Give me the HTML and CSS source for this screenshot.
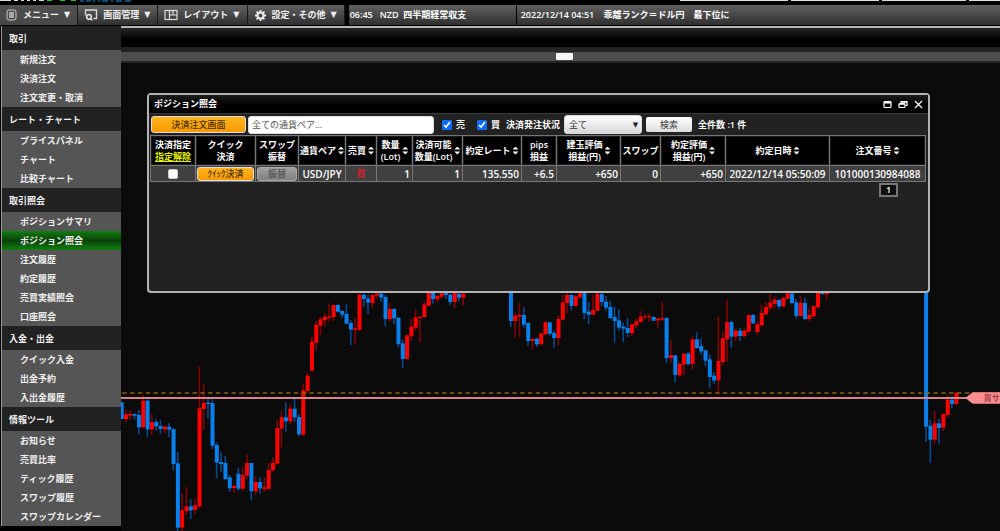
FILE: index.html
```html
<!DOCTYPE html>
<html lang="ja">
<head>
<meta charset="utf-8">
<title>ポジション照会</title>
<link rel="stylesheet" href="styles.css">
</head>
<body>
<header class="brand">
  <svg class="brand-logo" width="140" height="5" viewBox="0 0 140 5" aria-hidden="true">
    <path d="M0 0h11v1h-11zM14 0h4v1h-4zM21 0h3v1h-3zM27 0h3v1h-3zM33 0h3v1h-3zM39 0h5v1h-5z" fill="#d8dcd8"/>
    <path d="M47 0h5v1h-5zM60 0h5v1h-5zM71 0h5v1h-5z" fill="#20c828"/>
    <path d="M80 0h4v2h-4zM86 0h5v2h-5zM93 0h2v2h-2zM98 0h2v2h-2zM102 0h6v2h-6zM111 0h2v2h-2zM116 0h6v2h-6zM125 0h6v2h-6z" fill="#064a70"/>
  </svg>
  <div class="brand-tabs"><span></span><span></span><span></span><span></span></div>
</header>

<div class="toolbar">
  <nav class="toolbar-menus">
    <button class="tool tool-active" type="button">
      <svg width="12" height="12" viewBox="0 0 12 12"><rect x="1" y="1" width="9" height="10" rx="2" fill="none" stroke="#ccc"/><rect x="3" y="3" width="5" height="6" fill="#aaa"/></svg>
      <span>メニュー</span><i>▼</i>
    </button>
    <button class="tool" type="button">
      <svg width="14" height="12" viewBox="0 0 14 12" fill="none" stroke="#ddd" stroke-width="1.3"><path d="M1.5 5V1h11v8.500H9.500"/><circle cx="5" cy="8" r="2.300" stroke-width="1.700"/><path d="M1 5.500l1.500 1M7 10l1.500 1.200"/></svg>
      <span>画面管理</span><i>▼</i>
    </button>
    <button class="tool" type="button">
      <svg width="14" height="12" viewBox="0 0 14 12" fill="none" stroke="#ddd" stroke-width="1.200"><rect x="1" y="1.500" width="12" height="9"/><path d="M5.500 1.500v9M5.500 6H13M9 6V1.500"/></svg>
      <span>レイアウト</span><i>▼</i>
    </button>
    <button class="tool" type="button">
      <svg width="13" height="13" viewBox="0 0 13 13" fill="none" stroke="#eee"><circle cx="6.500" cy="6.500" r="3" stroke-width="2"/><path d="M6.500 1v2M6.500 10v2M1 6.500h2M10 6.500h2M2.600 2.600L4 4M9 9l1.400 1.400M10.400 2.600L9 4M4 9l-1.400 1.400" stroke-width="1.800"/></svg>
      <span>設定・その他</span><i>▼</i>
    </button>
  </nav>
  <div class="ticker ticker-event">06:45&nbsp;&nbsp; NZD&nbsp; 四半期経常収支</div>
  <div class="ticker ticker-news">2022/12/14 04:51&nbsp;&nbsp;&nbsp; 乖離ランク＝ドル円　最下位に</div>
</div>

<div class="workspace">
  <nav class="sidebar">
    <h2>取引</h2>
    <ul>
      <li><a href="#">新規注文</a></li>
      <li><a href="#">決済注文</a></li>
      <li><a href="#">注文変更・取消</a></li>
    </ul>
    <h2>レート・チャート</h2>
    <ul>
      <li><a href="#">プライスパネル</a></li>
      <li><a href="#">チャート</a></li>
      <li><a href="#">比較チャート</a></li>
    </ul>
    <h2>取引照会</h2>
    <ul>
      <li><a href="#">ポジションサマリ</a></li>
      <li><a href="#" class="current">ポジション照会</a></li>
      <li><a href="#">注文履歴</a></li>
      <li><a href="#">約定履歴</a></li>
      <li><a href="#">売買実績照会</a></li>
      <li><a href="#">口座照会</a></li>
    </ul>
    <h2>入金・出金</h2>
    <ul>
      <li><a href="#">クイック入金</a></li>
      <li><a href="#">出金予約</a></li>
      <li><a href="#">入出金履歴</a></li>
    </ul>
    <h2>情報ツール</h2>
    <ul>
      <li><a href="#">お知らせ</a></li>
      <li><a href="#">売買比率</a></li>
      <li><a href="#">ティック履歴</a></li>
      <li><a href="#">スワップ履歴</a></li>
      <li><a href="#">スワップカレンダー</a></li>
    </ul>
  </nav>

  <main class="desktop">
    <div class="panel-head"></div>
    <div class="splitter"><span class="splitter-grip"></span></div>
    <svg class="chart" viewBox="0 0 2637 1404" role="img" aria-label="USD/JPY">
      <g id="candles" transform="translate(2 666)"></g>
      <path d="M4 990H2637" stroke="#8a6410" stroke-width="4" stroke-dasharray="13 10.400"/>
      <path d="M0 1005H2540" stroke="#d88488" stroke-width="6"/>
      <path d="M2533 1005l22-17h82v34h-82z" fill="#f98e90"/>
      <text x="2588" y="1014" class="tag-text">買サ</text>
    </svg>

    <section class="window">
      <header class="window-title">
        <h1>ポジション照会</h1>
        <div class="window-tools">
          <button type="button" aria-label="最大化"><svg width="9" height="9" viewBox="0 0 9 9"><rect x="1" y="1.500" width="7" height="6" rx="1" fill="none" stroke="#fff" stroke-width="1.200"/><path d="M1 2.500h7" stroke="#fff" stroke-width="2"/></svg></button>
          <button type="button" aria-label="元に戻す"><svg width="10" height="9" viewBox="0 0 10 9"><path d="M3 3V1.500h6v4H7.500" fill="none" stroke="#fff" stroke-width="1.200"/><rect x="1" y="3.500" width="6" height="4" rx="1" fill="none" stroke="#fff" stroke-width="1.200"/><path d="M1 4h6M3 2h6" stroke="#fff" stroke-width="1.400"/></svg></button>
          <button type="button" aria-label="閉じる"><svg width="9" height="9" viewBox="0 0 9 9"><path d="M1 1l7 7M8 1L1 8" stroke="#fff" stroke-width="1.200"/></svg></button>
        </div>
      </header>

      <form class="filters">
        <button class="btn-orange btn-close-order" type="button">決済注文画面</button>
        <input class="pair" type="text" placeholder="全ての通貨ペア..." aria-label="通貨ペア">
        <label class="check check-sell"><input type="checkbox" checked>売</label>
        <label class="check"><input type="checkbox" checked>買</label>
        <label class="status-label" for="status">決済発注状況</label>
        <span class="select-wrap"><select id="status"><option>全て</option></select></span>
        <button class="btn-search" type="button">検索</button>
        <span class="total">全件数 :1 件</span>
      </form>

      <table class="positions">
        <colgroup><col class="c-pick"><col class="c-quick"><col class="c-swap"><col class="c-pair"><col class="c-side"><col class="c-lot"><col class="c-avail"><col class="c-rate"><col class="c-pips"><col class="c-open"><col class="c-points"><col class="c-pl"><col class="c-time"><col class="c-number"></colgroup>
        <thead>
          <tr>
            <th>決済指定<br><a href="#">指定解除</a></th>
            <th>クイック<br>決済</th>
            <th>スワップ<br>振替</th>
            <th><div class="sortable"><span>通貨ペア</span></div></th>
            <th><div class="sortable"><span>売買</span></div></th>
            <th><div class="sortable"><span>数量<br>(Lot)</span></div></th>
            <th><div class="sortable"><span>決済可能<br>数量(Lot)</span></div></th>
            <th><div class="sortable"><span>約定レート</span></div></th>
            <th>pips<br>損益</th>
            <th><div class="sortable"><span>建玉評価<br>損益(円)</span></div></th>
            <th>スワップ</th>
            <th><div class="sortable"><span>約定評価<br>損益(円)</span></div></th>
            <th><div class="sortable"><span>約定日時</span></div></th>
            <th><div class="sortable"><span>注文番号</span></div></th>
          </tr>
        </thead>
        <tbody>
          <tr>
            <td class="center"><input class="pick" type="checkbox" aria-label="決済指定"></td>
            <td class="action"><button class="btn-orange btn-row" type="button">ｸｲｯｸ決済</button></td>
            <td class="action"><button class="btn-row btn-off" type="button" disabled>振替</button></td>
            <td class="center">USD/JPY</td>
            <td class="center buy">買</td>
            <td>1</td>
            <td>1</td>
            <td>135.550</td>
            <td>+6.5</td>
            <td>+650</td>
            <td>0</td>
            <td>+650</td>
            <td class="center">2022/12/14 05:50:09</td>
            <td class="center">101000130984088</td>
          </tr>
        </tbody>
      </table>
      <div class="pager"><button type="button">1</button></div>
    </section>
  </main>
</div>
<script src="chart.js"></script>
</body>
</html>
```

FILE: styles.css
```css
* { box-sizing: border-box; }

body {
  margin: 0;
  min-height: 100vh;
  display: flex;
  flex-direction: column;
  overflow: hidden;
  background: #000;
  color: #fff;
  font: 600 9px/12px "Open Sans", "Noto Sans CJK JP", sans-serif;
}

button, input, select { font: inherit; color: inherit; margin: 0; }
button { padding: 0; border: 0; background: none; }
a { color: inherit; text-decoration: none; }
h1, h2 { margin: 0; font: inherit; }
ul { margin: 0; padding: 0; list-style: none; }

.brand { display: flex; justify-content: space-between; height: 5px; }
.brand-tabs { display: flex; gap: 3px; width: 32%; height: 1px; }
.brand-tabs span { flex: 108; background: #dde2de; }
.brand-tabs span:nth-child(2) { flex: 87; }
.brand-tabs span:nth-child(3) { flex: 84; }
.brand-tabs span:nth-child(4) { flex: 31; }

.toolbar { display: flex; height: 21px; padding-bottom: 1px; }
.toolbar-menus { display: flex; margin-right: 4px; }
.tool, .ticker { background: linear-gradient(#606060, #303030); }
.tool {
  display: flex;
  align-items: center;
  gap: 5px;
  padding: 0 7px 0 6px;
  border-right: 1px solid #181818;
  color: #f0f0f0;
  white-space: nowrap;
}
.tool-active { background: linear-gradient(#505050, #484848); }
.tool i { font: normal 8px/12px "DejaVu Sans", sans-serif; }
.tool svg { display: block; }
.ticker { line-height: 20px; white-space: nowrap; overflow: hidden; }
.ticker-event { width: 168px; padding-left: 1px; border-right: 1px solid #000; }
.ticker-news { flex: 1; padding-left: 4px; }

.workspace { flex: 1; display: flex; align-items: flex-start; }

.sidebar {
  flex: none;
  width: 120px;
  margin-left: 1px;
  border-left: 1px solid #999;
  background: #555;
  color: #f0f0f0;
}
.sidebar h2 { height: 24px; padding-left: 7px; line-height: 26px; background: #222; }
.sidebar a { display: block; height: 19px; padding-left: 18px; line-height: 19px; }
.sidebar .current { background: linear-gradient(#108010, #0a4008 50%, #108010); }

.desktop { position: relative; flex: 1; min-width: 0; background: #0b0b0b; }
.panel-head {
  height: 21px;
  border-top: 2px solid #b4b4b4;
  background: linear-gradient(#262626, #000 60%);
}
.splitter {
  display: flex;
  justify-content: center;
  height: 16px;
  padding: 1px 0 1px 8px;
  border: solid #242424;
  border-width: 5px 0 2px;
  background: #4d4d4d;
}
.splitter-grip { width: 17px; border-radius: 1px; background: #f4f4f4; }
.chart { display: block; width: 100%; }
.tag-text { font-size: 24px; fill: #a83c44; }
.up { fill: #f00; }
.up-wick { fill: #7c0404; }
.down { fill: #0a80ec; }
.down-wick { fill: #06488a; }

.window {
  position: absolute;
  top: 67px;
  left: 26px;
  right: 70px;
  min-height: 200px;
  border: 2px solid #b4b4b4;
  border-radius: 4px;
  background: #222;
}
.window-title {
  display: flex;
  align-items: center;
  justify-content: space-between;
  height: 19px;
  padding: 0 5px;
  border-bottom: 1px solid #383838;
  background: linear-gradient(#1c1c1c, #000 60%);
}
.window-tools { display: flex; gap: 6px; }
.window-tools svg { display: block; }

.filters { display: flex; align-items: center; height: 21px; padding: 0 2px; white-space: nowrap; }
.btn-orange {
  border: 1px solid #ddd;
  border-radius: 3px;
  background: linear-gradient(#ffb41c, #f89a04);
  color: #4a3000;
  font-weight: 500;
}
.btn-close-order { width: 95px; height: 17px; }
.pair {
  width: 186px;
  height: 18px;
  margin-left: 2px;
  padding: 0 3px;
  border: 1px solid #ddd;
  border-radius: 3px;
  background: #fff;
  color: #333;
  font-weight: normal;
}
.pair::placeholder { color: #555; opacity: 1; }
.check { display: flex; align-items: center; gap: 4px; margin-left: 12px; }
.check-sell { margin-left: 8px; }
.check input { width: 10px; height: 10px; accent-color: #0a6cff; }
.status-label { margin: 0 4px 0 6px; }
.select-wrap { position: relative; }
.select-wrap::after {
  content: "▼";
  position: absolute;
  right: 4px;
  top: 4px;
  color: #222;
  font: 7px/12px "DejaVu Sans", sans-serif;
  pointer-events: none;
}
.select-wrap select {
  display: block;
  width: 78px;
  height: 19px;
  padding: 0 4px;
  border: 1px solid #ddd;
  border-radius: 3px;
  appearance: none;
  background: linear-gradient(#fff, #d8d8d8);
  color: #333;
  font-weight: normal;
}
.btn-search {
  width: 46px;
  height: 15px;
  margin: 0 6px 0 4px;
  border-radius: 2px;
  background: linear-gradient(#fff, #ddd);
  color: #333;
  font-weight: normal;
}

.positions {
  width: calc(100% - 4px);
  margin-left: 1px;
  table-layout: fixed;
  border-collapse: collapse;
}
.positions th, .positions td { border: 1px solid #777; }
.positions th {
  height: 30px;
  padding: 0;
  background: #000;
  font-weight: 600;
  line-height: 12px;
  white-space: nowrap;
  box-shadow: inset 0 0 0 1px #1c1c1c;
}
.positions th a { color: #e4f000; text-decoration: underline; }
.positions td {
  height: 16px;
  padding: 0 2px;
  background: #404040;
  font-size: 10px;
  text-align: right;
  white-space: nowrap;
}
.positions .center { padding: 0; text-align: center; }
.positions .buy { color: #d8202c; font-size: 9px; }
.positions .action { padding: 0 1px; }
.c-pick { width: 45px; }
.c-quick { width: 60px; }
.c-swap { width: 43px; }
.c-pair { width: 47px; }
.c-side { width: 31px; }
.c-lot { width: 36px; }
.c-avail { width: 50px; }
.c-rate { width: 59px; }
.c-pips { width: 35px; }
.c-open { width: 64px; }
.c-points { width: 40px; }
.c-pl { width: 65px; }
.c-time { width: 104px; }
.c-number { width: 96px; }

.sortable { display: flex; align-items: center; justify-content: center; gap: 2px; }
.sortable::after {
  content: "";
  width: 6px;
  height: 8px;
  background: #fff;
  clip-path: polygon(50% 0, 100% 38%, 0 38%, 0 62%, 100% 62%, 50% 100%, 0 62%, 0 38%);
}
.pick {
  display: block;
  width: 10px;
  height: 10px;
  margin: 0 auto;
  border: 1px solid #ccc;
  border-radius: 2px;
  appearance: none;
  background: #fff;
}
.btn-row { display: block; width: 100%; height: 14px; font-size: 9px; line-height: 12px; }
.btn-off { border: 1px solid #aaa; border-radius: 3px; background: linear-gradient(#a0a0a0, #808080); color: #5c5c5c; }

.pager { display: flex; justify-content: flex-end; padding: 1px 30px 0 0; }
.pager button { width: 19px; height: 14px; border: 2px solid #777; background: #111; line-height: 10px; }
```

FILE: chart.js
```js
// Each run starts at a time slot; a candle is "direction wickTop bodyTop bodyBottom wickBottom".
const runs = [
  [0, `d 350 352 402 402,u 375 388 402 412,u 377 387 392 403,d 385 387 392 402,d 375 390 427 448,
u 330 347 427 430,d 343 347 433 456,u 387 411 433 450,d 402 411 424 437,d 405 423 432 446,
u 422 425 433 444,d 414 425 434 456,d 430 432 537 556,d 500 535 728 738,u 625 676 728 738,
u 606 664 678 690,d 643 664 676 702,u 641 661 675 688,u 245 370 664 668,u 297 354 372 434,
d 342 353 357 399,d 343 354 482 492,d 472 480 533 579,d 502 531 537 560,d 513 534 582 586,
d 570 577 610 620,u 598 603 609 623,d 548 566 611 617,u 548 570 611 617,u 508 534 572 582,
d 534 534 619 646,u 574 591 619 630,d 576 591 610 626,u 577 607 612 620,u 535 555 611 615,
u 517 534 556 560,u 405 429 536 538,u 377 397 431 487,d 353 397 409 440,u 357 371 409 417,
d 342 371 397 410,d 387 396 448 454,u 297 316 449 452,u 263 272 318 325,u 155 170 257 258,
u 108 119 173 196,u 96 103 122 150,u 86 95 106 126,u 55 94 98 110,u 60 60 96 108,
d 58 60 80 83,d 76 78 89 98,d 58 87 116 118,d 105 114 134 180,u 100 130 135 176,
u 27 29 134 138,d 27 29 42 66,d 30 41 53 87,u 28 30 54 68,u 24 26 32 42,
d 24 26 38 50,d 30 36 102 125,u 55 72 102 110,d 70 72 100 118,d 96 98 177 186,
d 164 175 222 250,u 150 151 222 224,u 102 125 154 168,u 74 97 128 136,u 94 95 99 174,
u 50 59 96 98,u 24 24 62 64,d 24 24 42 56,u 30 33 43 52,u 24 25 35 40,
d 24 24 30 42,d 26 29 51 60,u 24 24 51 70,d 24 27 38 48,u 24 26 38 60`],
  [90, `d 24 24 108 126,u 82 92 108 156,u 54 90 95 157,d 67 90 119 128,d 112 114 168 182,
u 160 162 168 194,d 158 161 178 186,u 144 145 178 179,u 108 112 148 150,d 110 112 146 152,
d 136 144 159 189,u 92 102 159 182,u 30 52 104 106,u 24 30 54 84,d 28 30 63 76,
u 30 34 63 65,u 24 25 37 40,d 24 24 84 102,d 51 80 89 117,u 30 75 89 90,
u 24 26 77 78,d 24 27 51 63,d 33 50 68 76,d 47 66 99 102,d 66 96 108 173,
d 72 106 128 137,d 112 125 131 171,d 100 129 144 156,u 117 118 144 154,u 101 109 121 128,
u 78 95 111 114,u 87 94 97 104,u 87 94 97 110,d 95 96 107 108,u 97 101 106 128,
u 51 100 104 108,d 96 99 219 234,u 165 211 219 233,d 210 211 270 293,u 232 236 271 276,
u 205 206 239 270,d 200 206 237 242,u 154 163 237 254,d 142 163 189 192,d 160 183 199 208,
d 196 196 227 243,d 208 223 276 308,d 262 272 287 298,u 95 228 286 328,u 142 160 231 240,
u 45 111 163 230,d 106 111 155 188,u 130 137 155 168,d 129 137 153 168,u 130 137 153 158,
u 90 90 140 145,d 87 90 115 117,u 109 118 141 150,u 60 84 121 124,u 50 66 88 92,
u 27 53 68 77,u 34 44 57 72,d 42 45 64 70,u 34 39 64 68,u 24 25 41 44,
d 24 26 54 58,d 42 52 93 100,u 32 53 93 95,d 38 54 102 104,u 70 90 102 108,
u 62 63 94 97,u 24 24 66 72,d 24 24 27 30,u 24 24 28 44`],
  [186, `d 24 24 425 470,d 405 422 464 534,u 378 415 464 475,d 401 415 429 476,u 386 387 428 438,
u 328 344 390 396,d 332 344 357 371,u 322 323 357 361`],
];

const SLOT = 12.975;
const layer = document.getElementById("candles");

function bar(className, x, top, width, bottom) {
  const rect = document.createElementNS("http://www.w3.org/2000/svg", "rect");
  rect.setAttribute("class", className);
  rect.setAttribute("x", x);
  rect.setAttribute("y", top);
  rect.setAttribute("width", width);
  rect.setAttribute("height", Math.max(bottom - top, 1));
  layer.appendChild(rect);
}

for (const [start, text] of runs) {
  text.split(",").forEach((entry, index) => {
    const [dir, ...values] = entry.trim().split(" ");
    const [wickTop, bodyTop, bodyBottom, wickBottom] = values.map(Number);
    const name = dir === "u" ? "up" : "down";
    const center = (start + index) * SLOT;
    bar(name + "-wick", center - 3, wickTop, 5, wickBottom);
    bar(name, center - 6, bodyTop, 12, bodyBottom);
  });
}
```
